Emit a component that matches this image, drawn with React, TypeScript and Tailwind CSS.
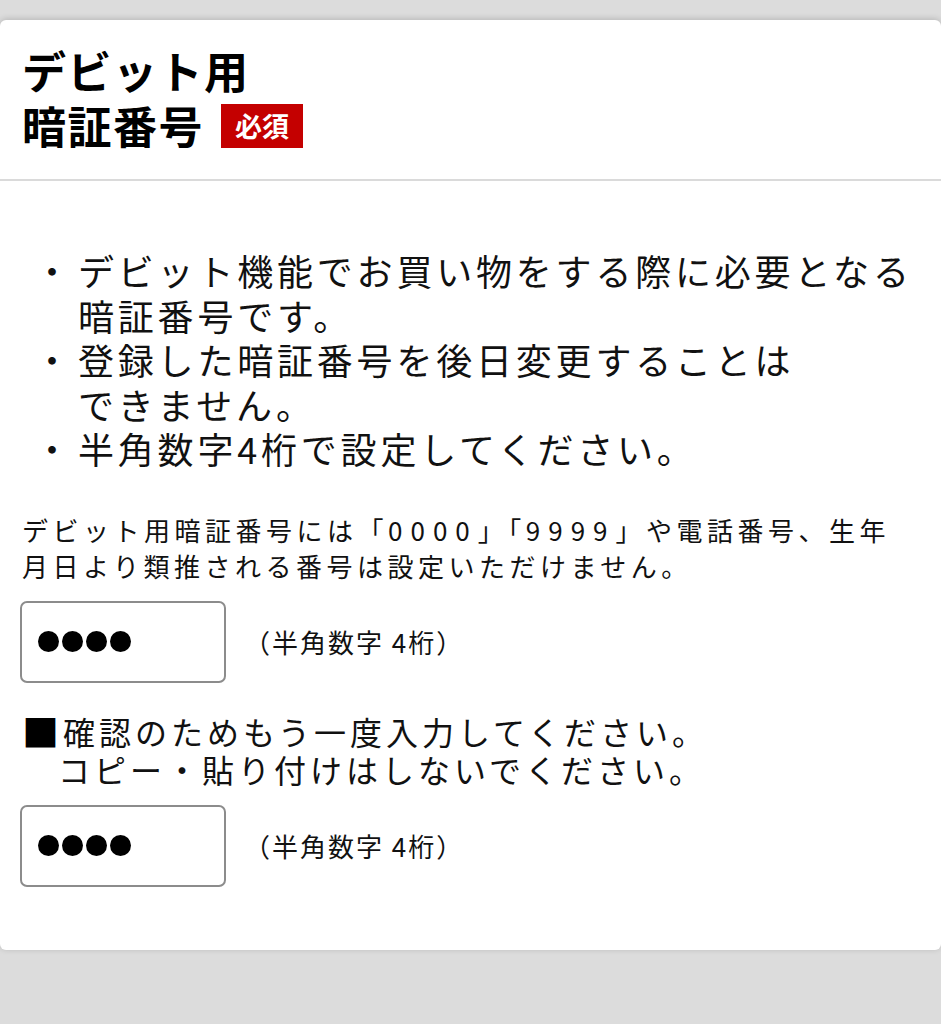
import React from "react";

const bullets = [
  ["デビット機能でお買い物をする際に必要となる", "暗証番号です。"],
  ["登録した暗証番号を後日変更することは", "できません。"],
  ["半角数字4桁で設定してください。"],
];

const PinField = () => (
  <div className="-ml-[2px] flex items-center">
    <div className="flex h-[82px] w-[206px] items-center gap-[3px] rounded-[7px] border-2 border-[#8c8c8c] bg-white pl-[16px]">
      {[0, 1, 2, 3].map((i) => (
        <span key={i} className="block h-[21px] w-[21px] rounded-full bg-black" />
      ))}
    </div>
    <span className="ml-[18px] text-[26px] leading-[36px] tracking-[2px] text-[#111]">
      （半角数字 4桁）
    </span>
  </div>
);

export default function App() {
  return (
    <div className="min-h-[1024px] bg-[#dcdcdc] pt-[20px] font-['Noto_Sans_CJK_JP','Noto_Sans',sans-serif] text-black">
      <div className="h-[930px] rounded-[6px] bg-white shadow-[0_-1px_6px_rgba(0,0,0,0.18)]">
        {/* header */}
        <div className="border-b-2 border-[#dadada] px-[22px] pb-[26px] pt-[23px]">
          <h1 className="text-[44px] font-bold leading-[55px] tracking-[1.5px]">デビット用</h1>
          <div className="flex items-center">
            <h1 className="text-[44px] font-bold leading-[55px] tracking-[1.5px]">暗証番号</h1>
            <span className="ml-[17px] flex h-[44px] w-[82px] items-center justify-center bg-[#c40000] text-[27px] font-bold leading-none text-white">
              必須
            </span>
          </div>
        </div>

        {/* body */}
        <div className="px-[22px] pt-[67px]">
          <ul className="pl-[12px] text-[36px] leading-[44.5px] tracking-[3.8px] whitespace-nowrap text-[#111]">
            {bullets.map((lines, i) => (
              <li key={i} className="flex">
                <span className="w-[44px] shrink-0 tracking-normal">・</span>
                <span>
                  {lines.map((l, j) => (
                    <span key={j} className="block">
                      {l}
                    </span>
                  ))}
                </span>
              </li>
            ))}
          </ul>

          <p className="mt-[41px] text-[26px] leading-[36px] tracking-[4.5px] whitespace-nowrap text-[#111]">
            デビット用暗証番号には「<span className="tracking-[8px]">0000</span>」「
            <span className="tracking-[8px]">9999</span>」や電話番号、生年
            <br />
            月日より類推される番号は設定いただけません。
          </p>

          <div className="mt-[17px]">
            <PinField />
          </div>

          <p className="mt-[29px] text-[32px] leading-[38px] tracking-[4px] whitespace-nowrap text-[#111]">
            <span className="mr-[4px] align-[-2px] text-[37px] leading-[0] tracking-normal text-black">■</span>
            確認のためもう一度入力してください。
            <br />
            {"　"}コピー・貼り付けはしないでください。
          </p>

          <div className="mt-[17px]">
            <PinField />
          </div>
        </div>
      </div>
    </div>
  );
}
